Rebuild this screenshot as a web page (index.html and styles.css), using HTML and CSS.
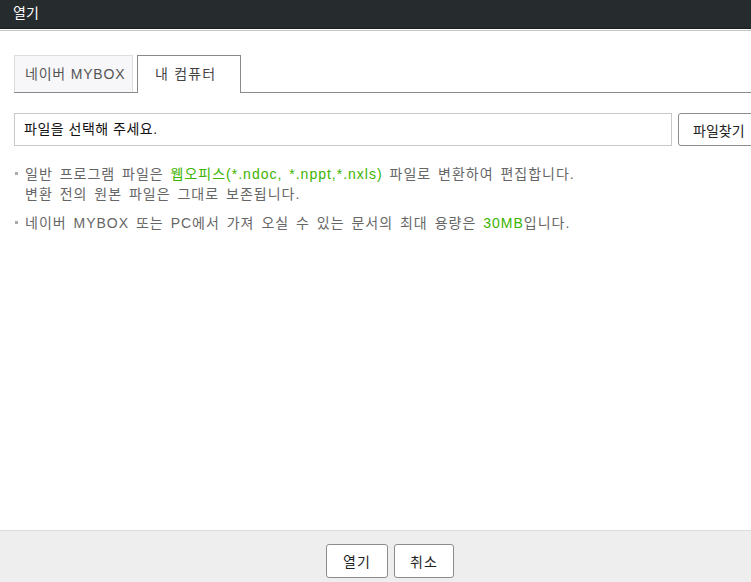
FILE: index.html
```html
<!DOCTYPE html>
<html>

<head>
    <meta charset="utf-8">
    <title>열기</title>
    <link rel="stylesheet" href="styles.css">
</head>

<body>
    <div id="header">열기</div>
    <div id="content">
        <div id="tabs">
            <div class="tab">네이버 MYBOX</div>
            <div class="tab cur">내 컴퓨터</div>
        </div>
        <div id="fileRow">
            <div class="fileInput">파일을 선택해 주세요.</div>
            <button class="btn findBtn">파일찾기</button>
        </div>
        <ul id="notice">
            <li>일반 프로그램 파일은 <em>웹오피스(*.ndoc, *.nppt,*.nxls)</em> 파일로 변환하여 편집합니다.<br>변환 전의 원본 파일은 그대로 보존됩니다.</li>
            <li>네이버 MYBOX 또는 PC에서 가져 오실 수 있는 문서의 최대 용량은 <em>30MB</em>입니다.</li>
        </ul>
    </div>
    <div id="footer">
        <button class="btn">열기</button>
        <button class="btn">취소</button>
    </div>
</body>

</html>
```

FILE: styles.css
```css
* {
    padding: 0;
    margin: 0;
    list-style: none;
    box-sizing: border-box;
}

html {
    height: 100%;
    overflow: hidden;
}

body {
    display: flex;
    flex-direction: column;
    width: 780px;
    height: 100%;
    font-family: "Liberation Sans", "Noto Sans CJK KR", sans-serif;
    font-size: 14px;
    color: #333;
    background: #fff;
}

#header {
    height: 29px;
    padding-left: 13px;
    line-height: 26px;
    font-size: 14px;
    color: #fff;
    background: #262b2e;
    border-bottom: 1px solid #1a1d1f;
    box-shadow: 0 1px 0 #fff, 0 2px 0 #c4c4c4;
}

#content {
    flex: 1;
    padding: 26px 0 0 14px;
}

#tabs {
    display: flex;
    align-items: flex-end;
    gap: 4px;
    height: 38px;
    border-bottom: 1px solid #8a8a8a;
}

#tabs .tab {
    width: 119px;
    height: 37px;
    padding-left: 10px;
    line-height: 36px;
    letter-spacing: 0.8px;
    color: #555;
    background: #f7f7f9;
    border: 1px solid #dedede;
    border-bottom: none;
}

#tabs .tab.cur {
    width: 104px;
    height: 38px;
    margin-bottom: -1px;
    padding-left: 17px;
    letter-spacing: 1.2px;
    color: #444;
    background: #fff;
    border-color: #8a8a8a;
}

#fileRow {
    display: flex;
    gap: 6px;
    margin-top: 20px;
}

.fileInput {
    flex-shrink: 0;
    width: 658px;
    height: 33px;
    padding-left: 9px;
    line-height: 31px;
    letter-spacing: 0.5px;
    color: #111;
    border: 1px solid #c8c8c8;
}

.btn {
    height: 34px;
    padding: 0 13px;
    font-family: inherit;
    font-size: 14px;
    letter-spacing: 1px;
    color: #222;
    background: #fff;
    border: 1px solid #8c8c8c;
    border-radius: 3px;
}

.findBtn {
    flex-shrink: 0;
    height: 33px;
    padding: 0 14px;
    letter-spacing: 0;
}

#notice {
    margin-top: 18px;
}

#notice li {
    position: relative;
    padding-left: 11px;
    margin-bottom: 9px;
    line-height: 20px;
    letter-spacing: 1px;
    word-spacing: 2px;
    color: #666;
}

#notice li::before {
    content: "";
    position: absolute;
    left: 1px;
    top: 8px;
    width: 3px;
    height: 3px;
    background: #aaa;
}

#notice em {
    font-style: normal;
    color: #3cb400;
}

#footer {
    display: flex;
    justify-content: center;
    gap: 6px;
    height: 52px;
    padding-top: 13px;
    background: #eee;
    border-top: 1px solid #ddd;
}

#footer .btn {
    width: 62px;
    padding: 0;
}

#footer .btn + .btn {
    width: 60px;
}
```
